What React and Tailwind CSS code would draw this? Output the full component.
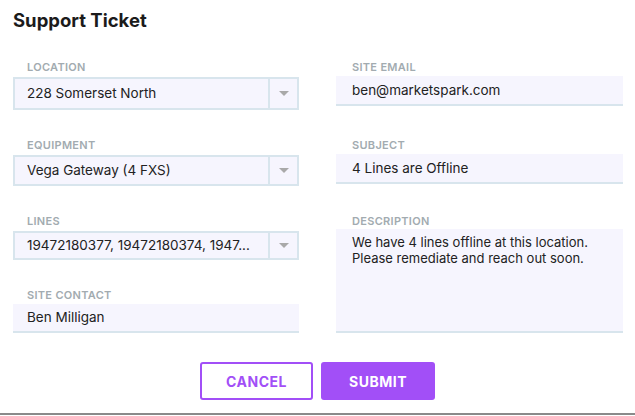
function Label({ children }) {
  return (
    <div className="h-[14px] text-[11px] leading-[14px] font-semibold tracking-[0.3px] text-[#a2abb0] uppercase">
      {children}
    </div>
  );
}

function SelectField({ label, value, boxClass = "h-[32px]" }) {
  return (
    <div className="flex flex-col">
      <div className="pl-[14px]">
        <Label>{label}</Label>
      </div>
      <div
        className={`mt-[3px] flex ${boxClass} border-2 border-[#d8e5ed] bg-[#f6f5fe]`}
      >
        <div className="flex-1 flex items-center pl-[12px] pr-2 text-[13.5px] text-[#222] truncate">
          {value}
        </div>
        <div className="w-[29px] flex items-center justify-center border-l-2 border-[#d8e5ed]">
          <div className="w-0 h-0 border-l-[5px] border-r-[5px] border-t-[5px] border-l-transparent border-r-transparent border-t-[#a9a9a9]" />
        </div>
      </div>
    </div>
  );
}

function TextField({ label, value, pad = "pl-[14px]" }) {
  return (
    <div className="flex flex-col">
      <div className={pad}>
        <Label>{label}</Label>
      </div>
      <div
        className={`mt-[2px] h-[30px] flex items-center ${pad} bg-[#f6f5fe] border-b-2 border-[#d8e5ed] text-[13.5px] text-[#222]`}
      >
        {value}
      </div>
    </div>
  );
}

export default function App() {
  return (
    <div
      className="w-[635px] h-[416px] bg-white flex flex-col"
      style={{ fontFamily: "Inter, 'Noto Sans', sans-serif" }}
    >
      {/* Header */}
      <h1 className="pt-[8px] pl-[13px] text-[18.5px] leading-[24px] font-bold text-[#1b1b1b]">
        Support Ticket
      </h1>

      {/* Form grid */}
      <div className="mt-[28px] ml-[13px] grid grid-cols-[286px_287px] grid-rows-[50px_48px_46px_45px] gap-x-[37px] gap-y-[28px]">
        <SelectField
          label="Location"
          value="228 Somerset North"
          boxClass="h-[33px]"
        />
        <TextField label="Site Email" value="ben@marketspark.com" pad="pl-4" />

        <SelectField
          label="Equipment"
          value="Vega Gateway (4 FXS)"
          boxClass="h-[31px]"
        />
        <TextField label="Subject" value="4 Lines are Offline" pad="pl-4" />

        <SelectField
          label="Lines"
          value="19472180377, 19472180374, 1947..."
          boxClass="h-[31px]"
        />
        <div className="row-span-2 flex flex-col">
          <div className="pl-4">
            <Label>Description</Label>
          </div>
          <div className="mt-[1px] flex-1 bg-[#f6f5fe] border-b-2 border-[#d8e5ed] pl-4 pr-3 pt-[5px] text-[13px] leading-[16px] text-[#222]">
            <div>We have 4 lines offline at this location.</div>
            <div>Please remediate and reach out soon.</div>
          </div>
        </div>

        <TextField label="Site Contact" value="Ben Milligan" />
      </div>

      {/* Actions */}
      <div className="mt-[29px] flex justify-center gap-2">
        <button className="w-[113px] h-[38px] rounded-[3px] border-2 border-[#a24ff7] bg-white text-[#a24ff7] text-[14px] font-bold tracking-[0.5px]">
          CANCEL
        </button>
        <button className="w-[114px] h-[38px] rounded-[3px] bg-[#a24ff7] text-white text-[14px] font-bold tracking-[0.5px]">
          SUBMIT
        </button>
      </div>

      <div className="mt-auto mb-px h-[2px] bg-[#8a8a8a]" />
    </div>
  );
}
